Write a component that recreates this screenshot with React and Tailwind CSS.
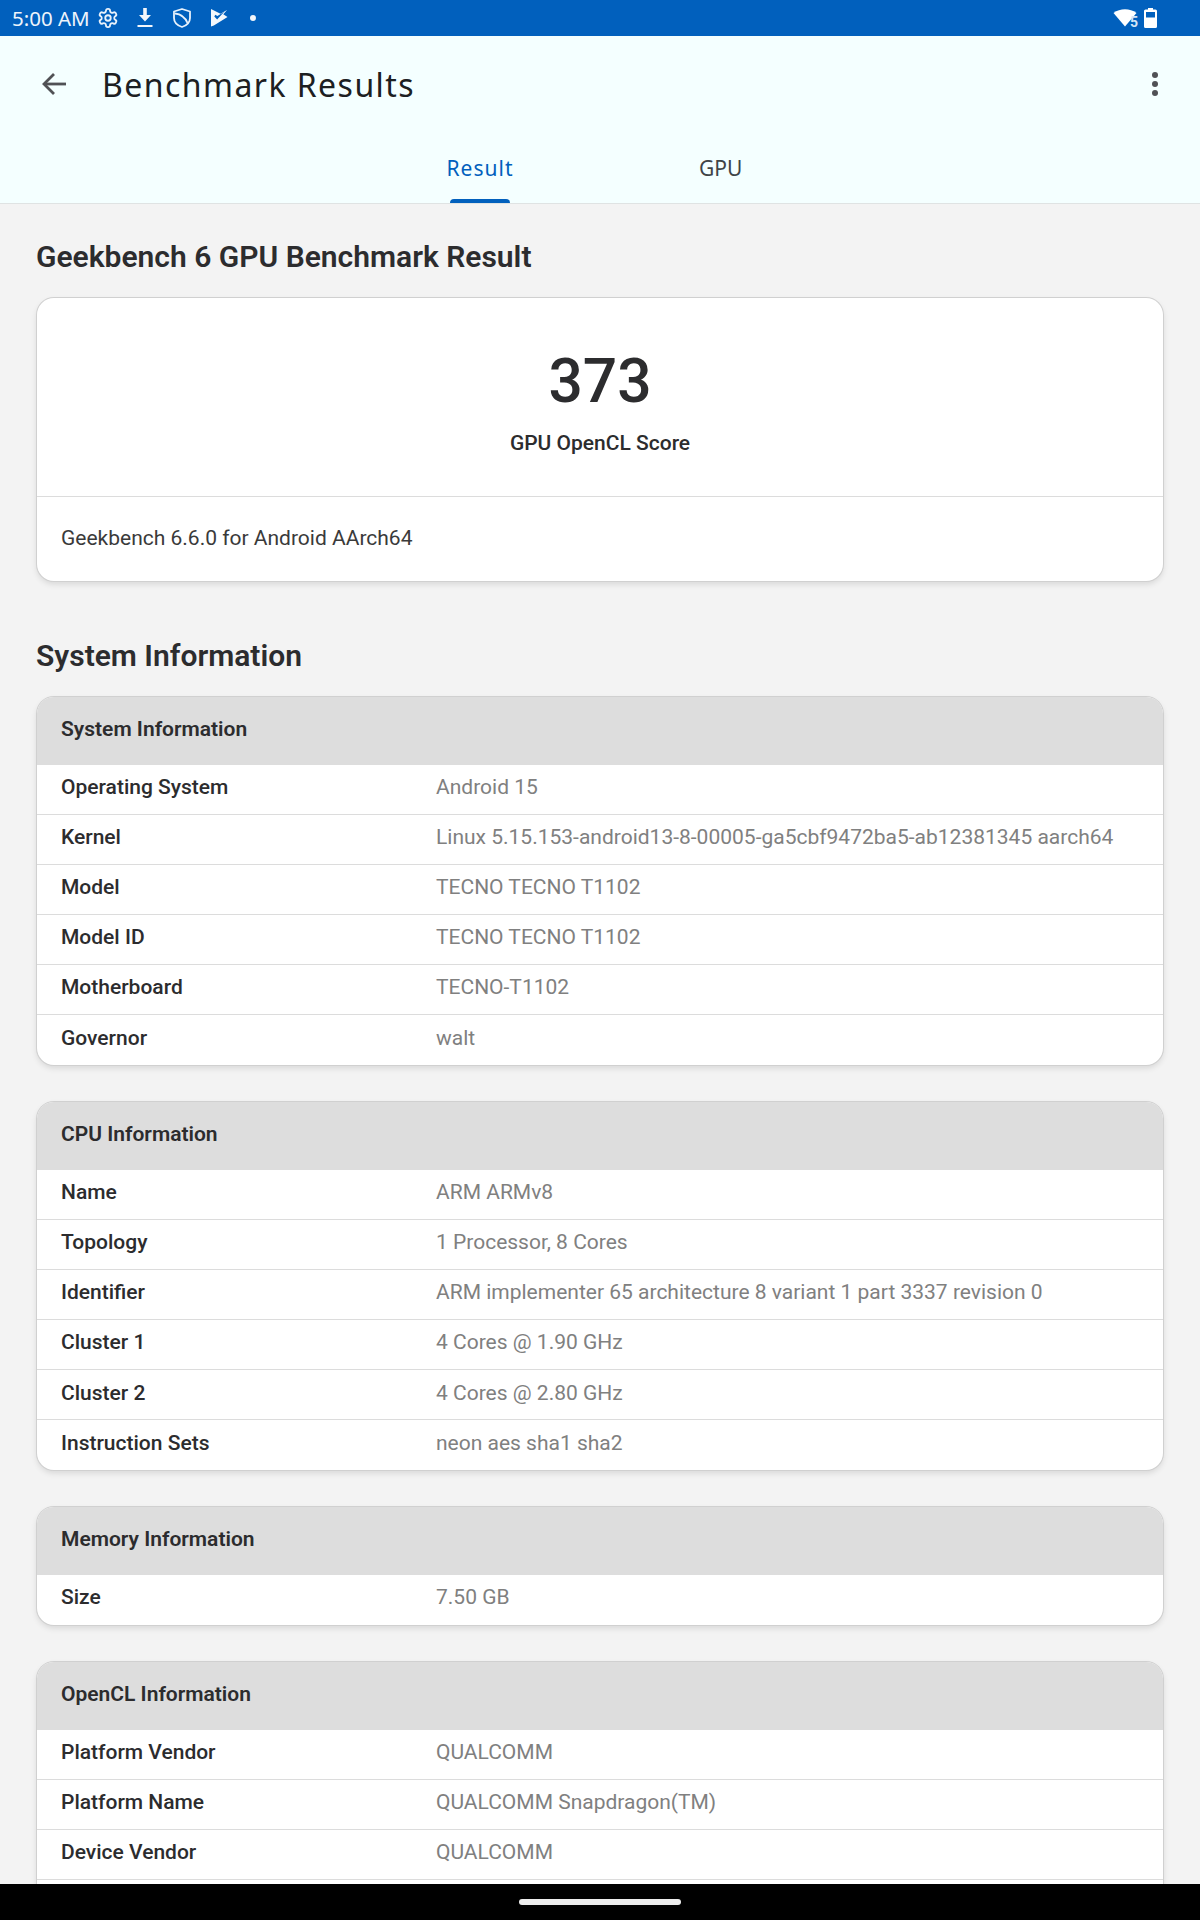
import React from "react";

const sections = [
  { title: "System Information", rows: [
    ["Operating System", "Android 15"],
    ["Kernel", "Linux 5.15.153-android13-8-00005-ga5cbf9472ba5-ab12381345 aarch64"],
    ["Model", "TECNO TECNO T1102"],
    ["Model ID", "TECNO TECNO T1102"],
    ["Motherboard", "TECNO-T1102"],
    ["Governor", "walt"],
  ]},
  { title: "CPU Information", rows: [
    ["Name", "ARM ARMv8"],
    ["Topology", "1 Processor, 8 Cores"],
    ["Identifier", "ARM implementer 65 architecture 8 variant 1 part 3337 revision 0"],
    ["Cluster 1", "4 Cores @ 1.90 GHz"],
    ["Cluster 2", "4 Cores @ 2.80 GHz"],
    ["Instruction Sets", "neon aes sha1 sha2"],
  ]},
  { title: "Memory Information", rows: [["Size", "7.50 GB"]] },
  { title: "OpenCL Information", more: true, rows: [
    ["Platform Vendor", "QUALCOMM"],
    ["Platform Name", "QUALCOMM Snapdragon(TM)"],
    ["Device Vendor", "QUALCOMM"],
  ]},
];

function Card({ title, rows, more }) {
  return (
    <div className="rounded-[17px] bg-white shadow-[0_0_0_1px_#d0d0d0,0_3px_6px_rgba(0,0,0,0.12)] overflow-hidden">
      <div className="h-[68px] bg-[#dddddd] pl-[24px] pb-[2px] flex items-center text-[21px] font-semibold text-[#2c2c2e]">
        {title}
      </div>
      {rows.map(([k, v]) => (
        <div key={k} className={"h-[50.05px] flex items-center pl-[24px] pb-[2px] text-[21px] border-b " + (more ? "border-[#dcdcdc]" : "border-[#dcdcdc] last:border-transparent")}>
          <div className="w-[375px] font-medium text-[#2c2c2e]">{k}</div>
          <div className="text-[#808080]">{v}</div>
        </div>
      ))}
      {more && <div className="h-[50px]" />}
    </div>
  );
}

function StatusIcons() {
  return (
    <div className="flex items-center ml-[7px]">
      <svg width="22" height="22" viewBox="0 0 24 24" fill="none" stroke="#e8f1fb" strokeWidth="2" strokeLinecap="round" strokeLinejoin="round">
        <path d="M12.22 2h-.44a2 2 0 0 0-2 2v.18a2 2 0 0 1-1 1.73l-.43.25a2 2 0 0 1-2 0l-.15-.08a2 2 0 0 0-2.73.73l-.22.38a2 2 0 0 0 .73 2.73l.15.1a2 2 0 0 1 1 1.72v.51a2 2 0 0 1-1 1.74l-.15.09a2 2 0 0 0-.73 2.73l.22.38a2 2 0 0 0 2.73.73l.15-.08a2 2 0 0 1 2 0l.43.25a2 2 0 0 1 1 1.73V20a2 2 0 0 0 2 2h.44a2 2 0 0 0 2-2v-.18a2 2 0 0 1 1-1.73l.43-.25a2 2 0 0 1 2 0l.15.08a2 2 0 0 0 2.73-.73l.22-.39a2 2 0 0 0-.73-2.73l-.15-.08a2 2 0 0 1-1-1.74v-.5a2 2 0 0 1 1-1.74l.15-.09a2 2 0 0 0 .73-2.73l-.22-.38a2 2 0 0 0-2.73-.73l-.15.08a2 2 0 0 1-2 0l-.43-.25a2 2 0 0 1-1-1.73V4a2 2 0 0 0-2-2z" />
        <circle cx="12" cy="12" r="3" />
      </svg>
      <svg className="ml-[18px]" width="16" height="20" viewBox="0 0 16 20" fill="#f2f6fb">
        <path d="M6.200 0h3.600v7H14l-6 6.500L2 7h4.200z" />
        <rect x="0.500" y="17" width="15" height="2" />
      </svg>
      <svg className="ml-[20px]" width="18" height="20" viewBox="0 0 18 20" fill="none" stroke="#e8f1fb" strokeWidth="1.800" strokeLinejoin="round">
        <path d="M9 1 L17 3.500 V10 C17 14.500 13.500 17.500 9 19 C4.500 17.500 1 14.500 1 10 V3.500 Z" />
        <path d="M2 5.500 C7 6 12 9 14.500 15" />
      </svg>
      <svg className="ml-[20px]" width="17" height="20" viewBox="0 0 18 20" fill="#f4f8fc">
        <path d="M0 0.500 L10 5.500 L17 1.500 L13 6 L17.500 9 L3 18 L0 19 Z" />
        <path d="M3.500 8.500 L6.500 11.500 L14 3.500 L6.800 8 L4.500 6.500 Z" fill="#0160bd" />
      </svg>
      <div className="ml-[22px] w-[6px] h-[6px] rounded-full bg-[#f2f6fb]" />
    </div>
  );
}

export default function App() {
  return (
    <div className="relative h-[1920px] w-[1200px] overflow-hidden flex flex-col bg-[#f3f3f3] font-['Roboto',sans-serif]">
      <div className="h-[36px] shrink-0 bg-[#0160bd] flex items-center justify-between pl-[12px] pr-[43px] text-[#eef4fb]">
        <div className="flex items-center">
          <span className="text-[20.500px] font-['Noto_Sans',sans-serif] leading-none">5:00 AM</span>
          <StatusIcons />
        </div>
        <div className="flex items-center gap-[5px]">
          <div className="relative w-[24px] h-[18px]">
            <svg width="24" height="18" viewBox="0 0 24 18" fill="#ffffff">
              <path d="M0.500 4 C7 -1 17 -1 23.500 4 L12 17.500 Z" />
            </svg>
            <span className="absolute right-[-1px] bottom-[-2px] text-[14px] leading-none font-bold text-[#d5e6f7]">5</span>
          </div>
          <svg className="ml-[2px]" width="13" height="20" viewBox="0 0 13 20">
            <path d="M4 0h5v1.500h2.500a1.500 1.500 0 0 1 1.500 1.500v15.500a1.500 1.500 0 0 1-1.500 1.500h-10a1.500 1.500 0 0 1-1.500-1.500v-15.500a1.500 1.500 0 0 1 1.500-1.500h2.500z" fill="#ffffff" />
            <rect x="2" y="4" width="9" height="5.500" fill="#0160bd" />
          </svg>
        </div>
      </div>

      <div className="h-[167px] shrink-0 bg-[#f4ffff] flex flex-col border-b border-[#dfe3e3] box-content">
        <div className="h-[96px] flex items-center pl-[41px] pr-[42px]">
          <svg width="26" height="24" viewBox="0 0 26 24" fill="none" stroke="#505155" strokeWidth="2.800">
            <path d="M25 12H3" />
            <path d="M13 2 L3 12 L13 22" />
          </svg>
          <div className="ml-[35px] mt-[2px] text-[32px] leading-none tracking-[1.450px] text-[#1c2022] font-['Noto_Sans',sans-serif] font-normal">
            Benchmark Results
          </div>
          <div className="ml-auto flex flex-col gap-[3px]">
            <div className="w-[6px] h-[6px] rounded-full bg-[#505155]" />
            <div className="w-[6px] h-[6px] rounded-full bg-[#505155]" />
            <div className="w-[6px] h-[6px] rounded-full bg-[#505155]" />
          </div>
        </div>
        <div className="flex-1 flex">
          <div className="ml-[446px] w-[68px] flex flex-col items-center justify-end relative">
            <span className="text-[21px] tracking-[1px] font-['Noto_Sans',sans-serif] text-[#0160bd] mb-[19px] whitespace-nowrap leading-[24px]">Result</span>
            <div className="w-[60px] h-[4px] rounded-t-[4px] bg-[#0160bd]" />
          </div>
          <div className="ml-[185px] flex flex-col justify-end">
            <span className="text-[21px] font-['Noto_Sans',sans-serif] text-[#3f4447] mb-[23px] leading-[24px]">GPU</span>
          </div>
        </div>
      </div>

      <div className="flex-1 min-h-0 overflow-hidden px-[37px]">
        <h1 className="-ml-px mt-[35px] text-[30px] leading-[36px] font-semibold text-[#2c2c2e]">Geekbench 6 GPU Benchmark Result</h1>
        <div className="mt-[23px] h-[283px] rounded-[17px] bg-white shadow-[0_0_0_1px_#d0d0d0,0_3px_6px_rgba(0,0,0,0.12)] overflow-hidden flex flex-col">
          <div className="h-[199px] shrink-0 flex flex-col items-center border-b border-[#dcdcdc]">
            <div className="mt-[49px] text-[60.500px] leading-[70px] font-medium text-[#2c2c2e]">373</div>
            <div className="mt-[12px] text-[21px] leading-[28px] font-medium text-[#2c2c2e]">GPU OpenCL Score</div>
          </div>
          <div className="flex-1 pl-[24px] flex items-center text-[21px] text-[#3a3a3a]">Geekbench 6.6.0 for Android AArch64</div>
        </div>
        <h2 className="-ml-px mt-[57px] text-[30px] leading-[36px] font-semibold text-[#2c2c2e]">System Information</h2>
        <div className="mt-[22.500px] flex flex-col gap-[36.800px]">
          {sections.map((s) => <Card key={s.title} {...s} />)}
        </div>
      </div>

      <div className="h-[36px] shrink-0 bg-black flex items-center justify-center">
        <div className="w-[162px] h-[6px] rounded-full bg-[#ececec]" />
      </div>
    </div>
  );
}
